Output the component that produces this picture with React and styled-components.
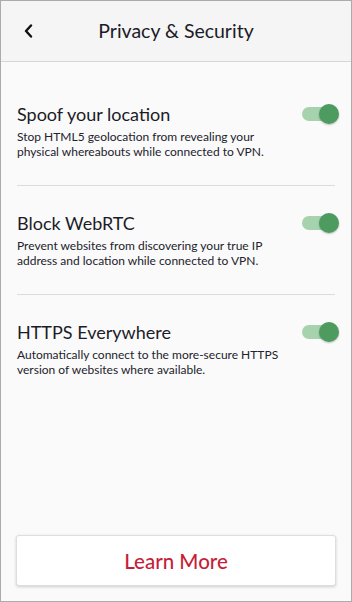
import styled, { createGlobalStyle } from 'styled-components'

const GlobalStyle = createGlobalStyle`
  html, body {
    margin: 0;
    padding: 0;
    background: #ffffff;
  }
  * {
    box-sizing: border-box;
  }
`

const Frame = styled.div`
  width: 352px;
  height: 602px;
  border: 1px solid #ababab;
  background: #fafafa;
  display: flex;
  flex-direction: column;
  font-family: Lato, "Open Sans", sans-serif;
  color: #1c1c28;
`

const Header = styled.header`
  height: 61px;
  flex-shrink: 0;
  background: #f5f5f5;
  border-bottom: 1px solid #d6d6d6;
  display: grid;
  grid-template-columns: 48px 1fr 48px;
  align-items: center;
`

const BackButton = styled.button`
  border: none;
  background: none;
  padding: 0 0 1px 23px;
  height: 100%;
  display: flex;
  align-items: center;
  cursor: pointer;
  color: #111;
`

const Title = styled.h1`
  margin: 0 0 2px;
  text-align: center;
  font-size: 19.5px;
  font-weight: 400;
`

const List = styled.div`
  flex: 1;
  padding: 15px 16px 0;
`

const Item = styled.div`
  padding: 26px 0 26px;
  border-bottom: ${p => (p.last ? 'none' : '1px solid #dcdcdc')};
`

const ItemHead = styled.div`
  display: flex;
  align-items: center;
  justify-content: space-between;
`

const ItemTitle = styled.h2`
  margin: 0;
  font-size: 18px;
  font-weight: 400;
  line-height: 22px;
`

const ItemText = styled.p`
  margin: 4px 0 0;
  font-size: 12px;
  line-height: 15px;
  color: #22222c;
  max-width: 272px;
`

const Toggle = styled.div`
  position: relative;
  width: 37px;
  height: 20px;
  margin-right: -4px;
  flex-shrink: 0;
`

const Track = styled.div`
  position: absolute;
  left: 0;
  top: 3px;
  width: 30px;
  height: 14px;
  border-radius: 7px;
  background: ${p => (p.on ? '#a6d3ae' : '#cfcfcf')};
`

const Knob = styled.div`
  position: absolute;
  top: 0;
  left: ${p => (p.on ? '17px' : '0')};
  width: 20px;
  height: 20px;
  border-radius: 50%;
  background: ${p => (p.on ? '#4d9b5f' : '#f1f1f1')};
  box-shadow: 0 1px 2px rgba(0, 0, 0, 0.25);
`

const Footer = styled.div`
  padding: 0 15px 15px 15px;
`

const LearnMore = styled.button`
  width: 100%;
  height: 51px;
  background: #ffffff;
  border: 1px solid #dedede;
  border-radius: 3px;
  box-shadow: 0 1px 3px rgba(0, 0, 0, 0.18);
  color: #c51f3a;
  font-family: Lato, "Open Sans", sans-serif;
  font-size: 20.5px;
  font-weight: 500;
  cursor: pointer;
`

const settings = [
  {
    title: 'Spoof your location',
    text: 'Stop HTML5 geolocation from revealing your physical whereabouts while connected to VPN.',
  },
  {
    title: 'Block WebRTC',
    text: 'Prevent websites from discovering your true IP address and location while connected to VPN.',
  },
  {
    title: 'HTTPS Everywhere',
    text: 'Automatically connect to the more-secure HTTPS version of websites where available.',
  },
]

const Chevron = () => (
  <svg width="9" height="14" viewBox="0 0 9 14">
    <path d="M7 1.5 L2 7 L7 12.5" fill="none" stroke="currentColor" strokeWidth="2.4" strokeLinecap="round" strokeLinejoin="round" />
  </svg>
)

const App = () => {
  return (
    <Frame>
      <GlobalStyle />
      <Header>
        <BackButton aria-label="Back">
          <Chevron />
        </BackButton>
        <Title>Privacy &amp; Security</Title>
        <div />
      </Header>
      <List>
        {settings.map((s, i) => (
          <Item key={s.title} last={i === settings.length - 1}>
            <ItemHead>
              <ItemTitle>{s.title}</ItemTitle>
              <Toggle>
                <Track on />
                <Knob on />
              </Toggle>
            </ItemHead>
            <ItemText>{s.text}</ItemText>
          </Item>
        ))}
      </List>
      <Footer>
        <LearnMore>Learn More</LearnMore>
      </Footer>
    </Frame>
  )
}

export default App
